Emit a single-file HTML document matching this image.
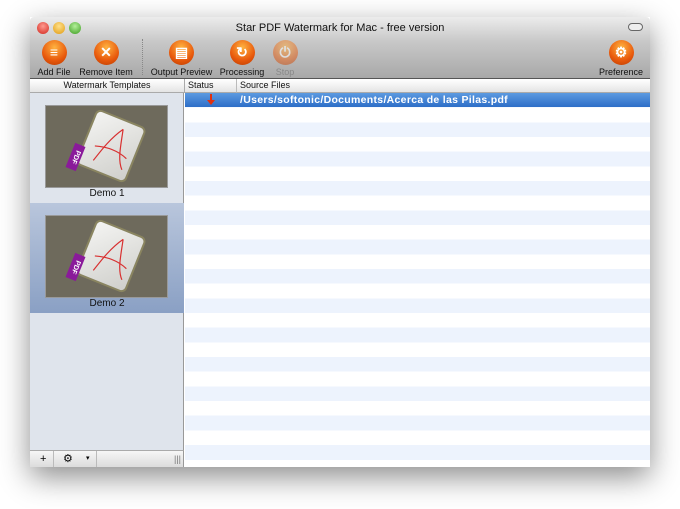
<!DOCTYPE html>
<html><head><meta charset="utf-8"><style>
*{margin:0;padding:0;box-sizing:border-box}
body{width:680px;height:509px;background:#fff;font-family:"Liberation Sans",sans-serif;position:relative;overflow:hidden}
.win{position:absolute;left:30px;top:17px;width:620px;height:450px;box-shadow:0 10px 28px rgba(0,0,0,.45);background:#fff}
.tb{position:absolute;left:0;top:0;width:620px;height:62px;background:linear-gradient(#ececec,#c8c8c8 40%,#a8a8a8);border-bottom:1px solid #555;border-radius:4px 4px 0 0}
.title{position:absolute;top:5px;width:100%;text-align:center;font-size:11px;color:#111}
.light{position:absolute;top:5px;width:12px;height:12px;border-radius:50%}
.btn{position:absolute;top:23px;text-align:center;font-size:9px;color:#111}
.ic{width:25px;height:25px;border-radius:50%;margin:0 auto 2px;background:radial-gradient(circle at 50% 30%,#ffb340,#e8590c 60%,#b83a00);color:#fff;font-weight:bold;font-size:14px;line-height:25px}
.hdr{position:absolute;top:62px;height:14px;background:linear-gradient(#fff,#e4e4e4);border-bottom:1px solid #aaa;font-size:9px;line-height:13px;color:#111}
.side{position:absolute;left:0;top:76px;width:154px;height:357px;background:#dfe4ec;border-right:1px solid #999}
.thumb{position:absolute;left:15px;width:123px;height:83px;background:#6e6a5c;border:1px solid #999;overflow:hidden}
.page{position:absolute;left:40px;top:12px;width:50px;height:56px;background:linear-gradient(135deg,#f4f4f2,#cfcfcb);border-radius:4px;transform:rotate(22deg);box-shadow:0 0 0 2px #8a8560}
.tag{position:absolute;left:24px;top:38px;width:11px;height:26px;background:#8a1a9a;transform:rotate(22deg);color:#fff;font-size:7px;line-height:11px;writing-mode:vertical-rl;text-align:center;font-weight:bold}
.lbl{position:absolute;width:154px;text-align:center;font-size:10px;color:#111}
.rows{position:absolute;left:155px;top:76px;width:465px;height:374px;background:repeating-linear-gradient(#edf3fd 0 14.67px,#fff 14.67px 29.34px)}
.sel{position:absolute;left:155px;top:76px;width:465px;height:14px;background:linear-gradient(#5c9ae0,#2d6ec8);color:#fff;font-weight:bold;font-size:10.5px;line-height:14px;letter-spacing:.3px}
.bot{position:absolute;left:0;top:433px;width:154px;height:17px;background:linear-gradient(#f6f6f6,#dcdcdc);border-top:1px solid #aaa;border-right:1px solid #999;font-size:11px;line-height:16px}
</style></head><body>
<div class="win">
<div class="tb">
<div class="light" style="left:7px;background:radial-gradient(circle at 50% 35%,#ff9a90,#d2261c)"></div>
<div class="light" style="left:23px;background:radial-gradient(circle at 50% 35%,#ffe08a,#e09a10)"></div>
<div class="light" style="left:39px;background:radial-gradient(circle at 50% 35%,#b4f09a,#3c9c20)"></div>
<div class="title">Star PDF Watermark for Mac - free version</div>
<div style="position:absolute;right:7px;top:6px;width:15px;height:8px;border:1px solid #666;border-radius:4px;background:#eee"></div>
<div class="btn" style="left:7px;width:34px"><div class="ic">≡</div>Add File</div>
<div class="btn" style="left:48px;width:56px"><div class="ic">✕</div>Remove Item</div>
<div style="position:absolute;left:112px;top:22px;height:36px;border-left:1px dotted #888"></div>
<div class="btn" style="left:119px;width:65px"><div class="ic">▤</div>Output Preview</div>
<div class="btn" style="left:188px;width:48px"><div class="ic">↻</div>Processing</div>
<div class="btn" style="left:240px;width:30px;color:#888"><div class="ic" style="opacity:.5">⏻</div>Stop</div>
<div class="btn" style="left:568px;width:46px"><div class="ic">⚙</div>Preference</div>
</div>
<div class="hdr" style="left:0;width:155px;text-align:center;border-right:1px solid #aaa">Watermark Templates</div>
<div class="hdr" style="left:155px;width:52px;padding-left:3px;border-right:1px solid #bbb">Status</div>
<div class="hdr" style="left:207px;width:413px;padding-left:3px">Source Files</div>
<div class="side">
<div style="position:absolute;left:0;top:110px;width:154px;height:110px;background:linear-gradient(#b9c6dc,#8aa0c4)"></div>
<div class="thumb" style="top:12px"><div class="page"><svg width="50" height="56" viewBox="0 0 50 56"><path d="M30 8 C22 20 18 34 14 48 M30 8 C34 24 36 38 44 46 M10 34 C22 30 34 30 44 34" stroke="#d83030" stroke-width="1.2" fill="none"/></svg></div><div class="tag">PDF</div></div>
<div class="lbl" style="top:95px">Demo 1</div>
<div class="thumb" style="top:122px"><div class="page"><svg width="50" height="56" viewBox="0 0 50 56"><path d="M30 8 C22 20 18 34 14 48 M30 8 C34 24 36 38 44 46 M10 34 C22 30 34 30 44 34" stroke="#d83030" stroke-width="1.2" fill="none"/></svg></div><div class="tag">PDF</div></div>
<div class="lbl" style="top:205px">Demo 2</div>
</div>
<div class="rows"></div>
<div class="sel"><svg style="position:absolute;left:21px;top:1px" width="10" height="12" viewBox="0 0 10 12"><path d="M5 0V10" stroke="#e03010" stroke-width="2"/><path d="M1 6L5 11L9 6Z" fill="#e03010"/></svg><span style="position:absolute;left:55px">/Users/softonic/Documents/Acerca de las Pilas.pdf</span></div>
<div class="bot"><span style="position:absolute;left:10px">+</span><span style="position:absolute;left:23px;top:0;height:16px;border-left:1px solid #bbb"></span><span style="position:absolute;left:33px">⚙</span><span style="position:absolute;left:56px;font-size:7px">▾</span><span style="position:absolute;left:66px;top:0;height:16px;border-left:1px solid #bbb"></span><span style="position:absolute;left:144px;font-size:9px;color:#777">|||</span></div>
</div>
</body></html>
